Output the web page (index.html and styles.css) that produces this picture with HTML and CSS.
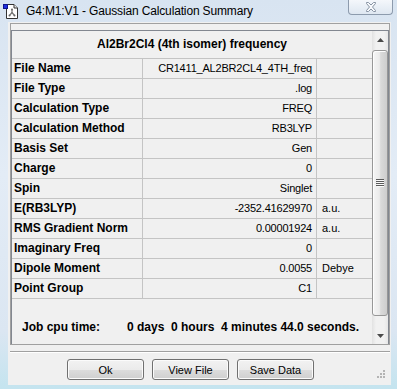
FILE: index.html
```html
<!DOCTYPE html>
<html lang="en">
<head>
    <meta charset="UTF-8">
    <title>G4:M1:V1 - Gaussian Calculation Summary</title>
    <link rel="stylesheet" href="styles.css">
</head>
<body>
    <div class="window">
        <div class="titlebar">
            <svg class="app-icon" viewBox="0 0 16 16" width="16" height="16">
                <path d="M3.5 1.5 H11 L14.5 5 V15.5 H3.5 Z" fill="#fff" stroke="#333"/>
                <path d="M11 1.5 V5 H14.5" fill="#e8e8e8" stroke="#333"/>
                <rect x="0.5" y="1.5" width="4" height="4" fill="#1f2fe0" stroke="#10148a"/>
                <path d="M9 6.5 V9.5 M9 9.5 L6.5 12.5 M9 9.5 L11.5 12.5" stroke="#777" stroke-width="1.2" fill="none"/>
                <circle cx="9" cy="6.5" r="1" fill="#666"/>
                <circle cx="6.5" cy="12.5" r="1" fill="#666"/>
                <circle cx="11.5" cy="12.5" r="1" fill="#666"/>
            </svg>
            <span class="title">G4:M1:V1 - Gaussian Calculation Summary</span>
            <div class="close-btn">
                <svg viewBox="0 0 12 10" width="12" height="10">
                    <polygon points="1.5,0.5 3.5,0.5 6,3 8.5,0.5 10.5,0.5 10.5,1.5 7.5,5 10.5,8.5 10.5,9.5 8.5,9.5 6,7 3.5,9.5 1.5,9.5 1.5,8.5 4.5,5 1.5,1.5" fill="#f7f9fc" stroke="#8793a3"/>
                </svg>
            </div>
        </div>

        <div class="client">
            <div class="panel">
                <div class="view">
                    <div class="content">
                        <div class="caption">Al2Br2Cl4 (4th isomer) frequency</div>
                        <div class="row"><div class="cell label">File Name</div><div class="cell value">CR1411_AL2BR2CL4_4TH_freq</div><div class="cell unit"></div></div>
                        <div class="row"><div class="cell label">File Type</div><div class="cell value">.log</div><div class="cell unit"></div></div>
                        <div class="row"><div class="cell label">Calculation Type</div><div class="cell value">FREQ</div><div class="cell unit"></div></div>
                        <div class="row"><div class="cell label">Calculation Method</div><div class="cell value">RB3LYP</div><div class="cell unit"></div></div>
                        <div class="row"><div class="cell label">Basis Set</div><div class="cell value">Gen</div><div class="cell unit"></div></div>
                        <div class="row"><div class="cell label">Charge</div><div class="cell value">0</div><div class="cell unit"></div></div>
                        <div class="row"><div class="cell label">Spin</div><div class="cell value">Singlet</div><div class="cell unit"></div></div>
                        <div class="row"><div class="cell label">E(RB3LYP)</div><div class="cell value">-2352.41629970</div><div class="cell unit">a.u.</div></div>
                        <div class="row"><div class="cell label">RMS Gradient Norm</div><div class="cell value">0.00001924</div><div class="cell unit">a.u.</div></div>
                        <div class="row"><div class="cell label">Imaginary Freq</div><div class="cell value">0</div><div class="cell unit"></div></div>
                        <div class="row"><div class="cell label">Dipole Moment</div><div class="cell value">0.0055</div><div class="cell unit">Debye</div></div>
                        <div class="row"><div class="cell label">Point Group</div><div class="cell value">C1</div><div class="cell unit"></div></div>

                        <div class="cpu">
                            <span class="cpu-label">Job cpu time:</span>
                            <span class="cpu-value">0 days&nbsp; 0 hours&nbsp; 4 minutes 44.0 seconds.</span>
                        </div>
                    </div>

                    <div class="scrollbar">
                        <div class="sb-btn">
                            <svg viewBox="0 0 7 4" width="7" height="4"><polygon points="3.5,0 7,4 0,4" fill="#4a4a4a"/></svg>
                        </div>
                        <div class="sb-thumb">
                            <svg viewBox="0 0 8 8" width="8" height="8">
                                <path d="M0 0.5 H8 M0 2.5 H8 M0 4.5 H8 M0 6.5 H8" stroke="#5a5a5a"/>
                                <path d="M1 1.5 H8 M1 3.5 H8 M1 5.5 H8 M1 7.5 H8" stroke="#fafafa"/>
                            </svg>
                        </div>
                        <div class="sb-btn sb-down">
                            <svg viewBox="0 0 7 4" width="7" height="4"><polygon points="0,0 7,0 3.5,4" fill="#4a4a4a"/></svg>
                        </div>
                    </div>
                </div>
            </div>

            <div class="separator"></div>

            <div class="buttons">
                <button class="btn">Ok</button>
                <button class="btn">View File</button>
                <button class="btn">Save Data</button>
            </div>

            <svg class="size-grip" viewBox="0 0 9 9" width="9" height="9">
                <rect x="6" y="0" width="2" height="2" fill="#b4b4b4"/>
                <rect x="3" y="3" width="2" height="2" fill="#b4b4b4"/>
                <rect x="6" y="3" width="2" height="2" fill="#b4b4b4"/>
                <rect x="0" y="6" width="2" height="2" fill="#b4b4b4"/>
                <rect x="3" y="6" width="2" height="2" fill="#b4b4b4"/>
                <rect x="6" y="6" width="2" height="2" fill="#b4b4b4"/>
            </svg>
        </div>
    </div>
</body>
</html>
```

FILE: styles.css
```css
* {
    box-sizing: border-box;
}

body {
    margin: 0;
    width: 397px;
    height: 389px;
    overflow: hidden;
    font-family: 'Liberation Sans', Arial, sans-serif;
    color: #000;
    background: linear-gradient(180deg, #d8e4f1 0%, #e3ecf6 45%, #dbe6f2 85%, #c4e4ef 100%);
}

.window {
    display: flex;
    flex-direction: column;
    height: 389px;
}

/* title bar */
.titlebar {
    height: 22px;
    flex-shrink: 0;
    display: flex;
    align-items: center;
    padding-left: 3px;
}

.app-icon {
    margin-top: -1px;
}

.title {
    margin-left: 7px;
    font-size: 12px;
    letter-spacing: -0.15px;
}

.close-btn {
    margin-left: auto;
    margin-right: 4px;
    align-self: flex-start;
    width: 45px;
    height: 15px;
    border: 1px solid #8d9bad;
    border-top: none;
    border-radius: 0 0 4px 4px;
    background: linear-gradient(#f4f7fb, #dee7f1);
    display: flex;
    align-items: center;
    justify-content: center;
}

/* client area */
.client {
    position: relative;
    margin: 0 6px 4px 8px;
    height: 363px;
    background: #f0f0f0;
    padding: 1px 1px 0 2px;
}

.panel {
    width: 380px;
    height: 322px;
    border: 1px solid #a0a0a0;
    padding-top: 6px;
}

.view {
    display: flex;
    height: 314px;
    border: 1px solid #828790;
    border-bottom: none;
}

.content {
    width: 360px;
}

.caption {
    height: 28px;
    line-height: 27px;
    border-bottom: 1px solid #c4c4c4;
    text-align: center;
    font-weight: bold;
    font-size: 12px;
}

.row {
    display: flex;
    height: 20px;
    border-bottom: 1px solid #c4c4c4;
}

.cell {
    line-height: 19px;
    white-space: nowrap;
}

.label {
    width: 131px;
    padding-left: 2px;
    border-right: 1px solid #c4c4c4;
    font-weight: bold;
    font-size: 12px;
}

.value {
    width: 174px;
    padding-right: 4px;
    border-right: 1px solid #c4c4c4;
    text-align: right;
    font-size: 11px;
    letter-spacing: -0.2px;
}

.unit {
    flex: 1;
    padding-left: 5px;
    font-size: 11px;
}

.cpu {
    display: flex;
    margin-top: 21px;
    padding-left: 10px;
    line-height: 14px;
    font-weight: bold;
    font-size: 12px;
    white-space: nowrap;
}

.cpu-label {
    width: 105px;
}

/* scrollbar */
.scrollbar {
    width: 16px;
    display: flex;
    flex-direction: column;
    background: linear-gradient(to right, #e2e2e2, #f1f1f1 25%, #f1f1f1 75%, #e6e6e6);
}

.sb-btn {
    height: 17px;
    flex-shrink: 0;
    display: flex;
    align-items: center;
    justify-content: center;
}

.sb-down {
    margin-top: auto;
}

.sb-thumb {
    margin-top: 2px;
    height: 266px;
    border: 1px solid #979797;
    border-radius: 3px;
    background: linear-gradient(to right, #f5f5f5, #ebebeb 45%, #dadada 55%, #cdcdcd);
    box-shadow: inset 1px 1px 0 #fdfdfd;
    display: flex;
    align-items: center;
    justify-content: center;
}

/* bottom */
.separator {
    width: 380px;
    height: 2px;
    margin-top: 6px;
    border-top: 1px solid #a0a0a0;
    border-bottom: 1px solid #fff;
}

.buttons {
    display: flex;
    gap: 8px;
    margin-top: 6px;
    padding-left: 57px;
}

.btn {
    width: 77px;
    height: 21px;
    padding: 0;
    border: 1px solid #707070;
    border-radius: 3px;
    background: linear-gradient(#f2f2f2 0%, #ebebeb 50%, #dddddd 51%, #cfcfcf 100%);
    box-shadow: inset 0 0 0 1px #fbfbfb;
    font-family: 'Liberation Sans', Arial, sans-serif;
    font-size: 11px;
    color: #000;
}

.size-grip {
    position: absolute;
    right: 5px;
    bottom: 6px;
}
```
